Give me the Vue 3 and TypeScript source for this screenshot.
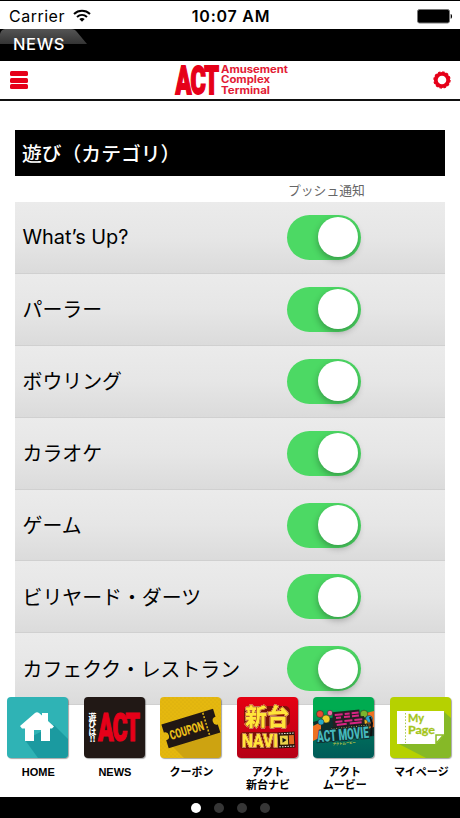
<script setup lang="ts">
import { ref } from 'vue'

interface Category {
  name: string
  push: boolean
}

interface Tab {
  id: string
  label: string[]
}

const categories = ref<Category[]>([
  { name: 'What’s Up?', push: true },
  { name: 'パーラー', push: true },
  { name: 'ボウリング', push: true },
  { name: 'カラオケ', push: true },
  { name: 'ゲーム', push: true },
  { name: 'ビリヤード・ダーツ', push: true },
  { name: 'カフェクク・レストラン', push: true }
])

const tabs: Tab[] = [
  { id: 'home', label: ['HOME'] },
  { id: 'news', label: ['NEWS'] },
  { id: 'coupon', label: ['クーポン'] },
  { id: 'navi', label: ['アクト', '新台ナビ'] },
  { id: 'movie', label: ['アクト', 'ムービー'] },
  { id: 'mypage', label: ['マイページ'] }
]

const page = ref(0)
</script>

<template>
  <div class="app">
    <!-- ステータスバー -->
    <div class="status">
      <div class="carrier">
        <span>Carrier</span>
        <svg width="18" height="14" viewBox="0 0 18 14" fill="none" stroke="#000" stroke-width="2">
          <path d="M1 4.9C5.6.6 12.4.6 17 4.9" />
          <path d="M4 8C7 5.3 11 5.3 14 8" />
          <path d="M6.3 9.9C7.9 8.6 10.1 8.6 11.7 9.9L9 12.7z" fill="#000" stroke="none" />
        </svg>
      </div>
      <div class="clock">10:07 AM</div>
      <div class="battery">
        <svg width="36" height="15" viewBox="0 0 36 15">
          <rect x=".5" y=".5" width="32" height="13.5" rx="2" fill="#000" stroke="#777" />
          <path d="M33.7 5c1.8.4 1.8 4.3 0 4.8z" fill="#000" />
        </svg>
      </div>
    </div>

    <div class="title-bar">
      <svg class="title-tab" width="88" height="15" viewBox="0 0 88 15">
        <defs>
          <linearGradient id="tabShade" x1="0" y1="0" x2="0" y2="1">
            <stop offset="0" stop-color="#555" />
            <stop offset="1" stop-color="#343434" />
          </linearGradient>
        </defs>
        <path d="M0 15V5Q1 .5 5 0H71Q75 0 77 3L87 15z" fill="url(#tabShade)" />
      </svg>
      <span>NEWS</span>
    </div>

    <!-- ヘッダー -->
    <header class="header">
      <button class="menu" aria-label="menu"><i></i><i></i><i></i></button>
      <svg class="logo" width="114" height="34" viewBox="0 0 114 34">
        <text class="logo-act" transform="translate(1.5 31.3) scale(.6 1)" x="0 25 48">ACT</text>
        <g class="logo-sub">
          <text x="47" y="10.3" textLength="67" lengthAdjust="spacingAndGlyphs">Amusement</text>
          <text x="47" y="20.3" textLength="49" lengthAdjust="spacingAndGlyphs">Complex</text>
          <text x="47" y="30.7" textLength="49" lengthAdjust="spacingAndGlyphs">Terminal</text>
        </g>
      </svg>
      <svg class="gear" width="18" height="18" viewBox="0 0 18 18" fill="none" stroke="#e60019">
        <circle cx="9" cy="9" r="6.2" stroke-width="3.8" />
        <circle cx="9" cy="9" r="8" stroke-width="1.4" stroke-dasharray="2.4 1.789" />
      </svg>
    </header>

    <!-- 通知設定 -->
    <main class="content">
      <h2>遊び（カテゴリ）</h2>
      <div class="push-label"><span>プッシュ通知</span></div>
      <ul>
        <li v-for="item in categories" :key="item.name">
          <span class="name">{{ item.name }}</span>
          <button :class="['switch', { on: item.push }]" @click="item.push = !item.push"><i></i></button>
        </li>
      </ul>
    </main>

    <!-- 下部メニュー -->
    <nav class="tabs">
      <div v-for="tab in tabs" :key="tab.id" class="tab">
        <div :class="['tile', tab.id]">
          <svg v-if="tab.id === 'home'" viewBox="0 0 61 61">
            <path d="M47 28L61 42V61H31L18 43z" fill="#1b9aa0" />
            <path d="M13 29L28 16q2-1.5 4 0l3 2.5V16h6v8l6 5.5-2 2h-2V44H34V33h-7v11h-9V31.500h-3z" fill="#fff" />
          </svg>

          <svg v-else-if="tab.id === 'news'" viewBox="0 0 61 61">
            <g class="news-side">
              <text x="8.5" y="22.5">遊</text>
              <text x="8.5" y="30">び</text>
              <text x="8.5" y="37.5">は</text>
              <text x="8.5" y="45">!!</text>
            </g>
            <text class="news-act" transform="translate(14 44) scale(.6 1)" x="0 24 46">ACT</text>
          </svg>

          <svg v-else-if="tab.id === 'coupon'" viewBox="0 0 61 61">
            <defs>
              <pattern id="dots" width="4" height="4" patternUnits="userSpaceOnUse">
                <circle cx="1" cy="1" r=".6" fill="#d0a60c" />
                <circle cx="3" cy="3" r=".6" fill="#d0a60c" />
              </pattern>
            </defs>
            <rect width="61" height="61" fill="url(#dots)" />
            <path d="M13 50L59 34L61 36V61H24z" fill="#cda311" />
            <g transform="rotate(-17 31 32)">
              <path d="M4 19H58V27.500a4 4 0 0 0 0 8V44H4V35.500a4 4 0 0 0 0-8z" fill="#211713" />
              <path d="M47 20V43" stroke="#ddb313" stroke-width="1.6" stroke-dasharray="2 1.5" />
              <text class="coupon-text" x="9" y="36.7" textLength="35" lengthAdjust="spacingAndGlyphs">COUPON</text>
            </g>
          </svg>

          <svg v-else-if="tab.id === 'navi'" viewBox="0 0 61 61">
            <rect x="7" y="9" width="46" height="20" rx="5" fill="#7c1208" />
            <rect x="3" y="35" width="40" height="17" rx="4" fill="#7c1208" />
            <g class="navi-text">
              <text x="8" y="27.5" font-size="23" textLength="44" lengthAdjust="spacingAndGlyphs">新台</text>
              <text class="navi-latin" x="5" y="50" font-size="18" textLength="36" lengthAdjust="spacingAndGlyphs">NAVI</text>
            </g>
            <g transform="rotate(-3 49 43)">
              <rect x="41" y="35" width="17" height="16" fill="#2b1508" />
              <path d="M42 36.5h15M42 49.5h15" stroke="#eee" stroke-dasharray="1.5 1.2" />
              <rect x="43" y="38.5" width="8" height="9" fill="#ead14a" />
              <rect x="52" y="38.5" width="5" height="9" fill="#e56a20" />
              <path d="M45.5 40.5l4 2.5-4 2.5z" fill="#111" />
            </g>
          </svg>

          <svg v-else-if="tab.id === 'movie'" viewBox="0 0 61 61">
            <path d="M0 25L10 22L57 15L61 26V39L6 46z" fill="#0c302e" />
            <path d="M0 29L8 25L8 40L0 44zM53 16L61 14V30L55 32z" fill="#ee7222" />
            <g stroke="#222" stroke-width=".5">
              <circle cx="7" cy="17" r="3.5" fill="#e84b35" />
              <circle cx="13" cy="22" r="4" fill="#efcf28" />
              <circle cx="8" cy="25" r="3" fill="#26a9ca" />
              <circle cx="17" cy="16" r="2.7" fill="#ec6aa0" />
              <circle cx="51" cy="17" r="3.8" fill="#7bb52e" />
              <circle cx="56" cy="22" r="3.5" fill="#25a6d0" />
              <circle cx="52" cy="25" r="2.5" fill="#efb421" />
            </g>
            <g transform="rotate(-6 32 20)">
              <path d="M20 14h27v7h4v8H19z" fill="#222" />
              <path d="M22 17h8m2 0h5m2 0h7M23 20h5m3 0h6m2 0h7M22 24h7m2 0h8m2 0h8M23 27h10m3 0h12" stroke="#d72583" stroke-width="2" />
              <path d="M17 30.5h40" stroke="#171e1d" stroke-width="3" />
              <path d="M17 30.5h40" stroke="#e8d46c" stroke-width=".8" stroke-dasharray="1 1.5" />
            </g>
            <g transform="rotate(-5 31 38)">
              <text class="movie-text" x="4" y="43" textLength="52" lengthAdjust="spacingAndGlyphs">ACT MOVIE</text>
              <text class="movie-kana" x="19" y="47.5" textLength="23">アクトムービー</text>
            </g>
            <path d="M57 20l2 6-1 13" fill="none" stroke="#111" stroke-width="2" />
          </svg>

          <svg v-else viewBox="0 0 61 61">
            <path d="M53 14L61 21V61H36L7 46z" fill="#86b927" />
            <path d="M7 14H54V38L46 47H7z" fill="#fff" />
            <path d="M15.5 16V46" stroke="#a8ca4c" stroke-dasharray="1.5 1.7" />
            <path d="M46 46.500V38h7.500z" fill="#fff" stroke="#8dbd27" stroke-width="1.5" />
            <g class="mypage-text">
              <text x="18" y="25" textLength="16" lengthAdjust="spacingAndGlyphs">My</text>
              <text x="18" y="36.5" textLength="27" lengthAdjust="spacingAndGlyphs">Page</text>
            </g>
          </svg>
        </div>
        <div class="tab-label">
          <div v-for="line in tab.label" :key="line">{{ line }}</div>
        </div>
      </div>
    </nav>

    <div class="pager">
      <i v-for="n in 4" :key="n" :class="{ active: page === n - 1 }"></i>
    </div>
  </div>
</template>

<style>
body {
  margin: 0;
  background: #fff;
}
</style>

<style scoped>
.app {
  width: 460px;
  height: 818px;
  display: flex;
  flex-direction: column;
  overflow: hidden;
  background: #fff;
  color: #000;
  font-family: Inter, 'Noto Sans CJK JP', sans-serif;
}
button {
  padding: 0;
  border: none;
  background: none;
  cursor: pointer;
}

/* ステータスバー */
.status {
  box-sizing: border-box;
  height: 29px;
  flex-shrink: 0;
  border-top: 1px solid #000;
  display: grid;
  grid-template-columns: 1fr auto 1fr;
  align-items: center;
  padding: 2px 7px 0 9px;
  font-size: 16px;
}
.carrier {
  display: flex;
  align-items: center;
  gap: 8px;
  letter-spacing: .5px;
}
.clock {
  font-weight: 600;
  letter-spacing: .75px;
}
.battery {
  display: flex;
  justify-content: flex-end;
}

.title-bar {
  height: 32px;
  flex-shrink: 0;
  background: #000;
  display: grid;
  color: #fff;
  font-size: 16.5px;
  font-weight: 500;
  letter-spacing: .6px;
}
.title-tab,
.title-bar span {
  grid-area: 1 / 1;
}
.title-bar span {
  padding: 5px 0 0 13px;
  line-height: 20px;
}

/* ヘッダー */
.header {
  box-sizing: border-box;
  height: 40px;
  flex-shrink: 0;
  display: grid;
  grid-template-columns: 1fr auto 1fr;
  align-items: center;
  padding: 0 9px 0 10px;
  border-bottom: 2px solid #111;
}
.menu {
  width: 18px;
  display: flex;
  flex-direction: column;
  gap: 1.5px;
}
.menu i {
  height: 5px;
  border-radius: 1.5px;
  background: #e60019;
}
.logo {
  display: block;
  overflow: visible;
}
.logo-act {
  font: 900 39px Roboto, sans-serif;
  fill: #e60019;
  stroke: #e60019;
  stroke-width: 1.8px;
}
.logo-sub {
  font: 700 9.8px Inter, sans-serif;
  fill: #e21b35;
}
.gear {
  justify-self: end;
}

/* 通知設定 */
.content {
  height: 605px;
  flex-shrink: 0;
  box-sizing: border-box;
  padding: 29px 15px 0;
  overflow: hidden;
}
h2 {
  margin: 0;
  height: 46px;
  padding-left: 7px;
  background: #000;
  color: #fff;
  font-size: 19.8px;
  font-weight: 500;
  line-height: 48px;
}
.push-label {
  height: 26px;
  padding-left: 273px;
  color: #666;
  font-size: 12.8px;
  line-height: 29px;
}
ul {
  list-style: none;
  margin: 0;
  padding: 0;
}
li {
  box-sizing: border-box;
  height: 71.9px;
  display: grid;
  grid-template-columns: 272px 1fr;
  align-items: center;
  border-bottom: 1px solid #d0d0d0;
  background: linear-gradient(#ebebeb, #e6e6e6 50%, #dbdbdb);
}
.name {
  padding: 0 0 1px 7.5px;
  font-size: 19.9px;
}
.switch {
  width: 74px;
  height: 45px;
  box-sizing: border-box;
  padding: 2px 3px;
  border-radius: 23px;
  background: #ccc;
  display: flex;
  align-items: center;
}
.switch.on {
  background: #4cd964;
  justify-content: flex-end;
}
.switch i {
  width: 40px;
  height: 40px;
  border-radius: 50%;
  background: #fff;
  box-shadow: 0 3px 7px rgba(0, 0, 0, .3);
}

/* 下部メニュー */
.tabs {
  position: relative;
  height: 100px;
  margin-top: -9px;
  flex-shrink: 0;
  display: grid;
  grid-template-columns: repeat(6, 76.6px);
}
.tab {
  display: flex;
  flex-direction: column;
  align-items: center;
}
.tile {
  width: 61px;
  height: 61px;
  margin-right: 1.4px;
  border-radius: 4px;
  overflow: hidden;
  box-shadow: 1px 1px 1px rgba(0, 0, 0, .35);
}
.tile svg {
  display: block;
  width: 61px;
  height: 61px;
}
.home { background: #2fb3b5; }
.news { background: #211815; }
.coupon { background: #e5b80f; }
.navi { background: linear-gradient(#e50012, #b50016); }
.movie { background: linear-gradient(#00ab50 20%, #006d5b 60%, #005b58); }
.mypage { background: #b6d100; }

.tab-label {
  margin-top: 8px;
  font: 700 11px/13px 'Liberation Sans', 'Noto Sans CJK JP', sans-serif;
  text-align: center;
  white-space: nowrap;
}

.news-side {
  font: 900 7.8px 'Noto Sans CJK JP', sans-serif;
  fill: #fff;
  text-anchor: middle;
}
.news-act {
  font: 900 38px Roboto, sans-serif;
  fill: #e60019;
  stroke: #e60019;
  stroke-width: 1.2px;
}
.coupon-text {
  font: 900 13px Roboto, sans-serif;
  fill: #e9bd17;
}
.navi-text {
  font-family: 'Noto Sans CJK JP', sans-serif;
  font-weight: 900;
  fill: #ffe53b;
  stroke: #a42b0c;
  stroke-width: 1.2px;
  paint-order: stroke;
  stroke-linejoin: round;
  filter: drop-shadow(0 0 .7px #fff3c9) drop-shadow(0 0 .5px #ffe9a8);
}
.navi-latin {
  font-family: Roboto, sans-serif;
}
.movie-text {
  font: 900 16px Roboto, sans-serif;
  fill: #45b9bd;
  stroke: #122e30;
  stroke-width: 2px;
  paint-order: stroke;
}
.movie-kana {
  font: 700 3.3px 'Noto Sans CJK JP', sans-serif;
  fill: #d8d53c;
}
.mypage-text {
  font: 700 11.5px Lato, sans-serif;
  fill: #a5c51b;
  stroke: #a5c51b;
  stroke-width: .3px;
}

.pager {
  flex: 1;
  background: #000;
  display: flex;
  justify-content: center;
  align-items: center;
  gap: 13px;
}
.pager i {
  width: 10px;
  height: 10px;
  border-radius: 50%;
  background: #363636;
}
.pager i.active {
  background: #fff;
}
</style>
